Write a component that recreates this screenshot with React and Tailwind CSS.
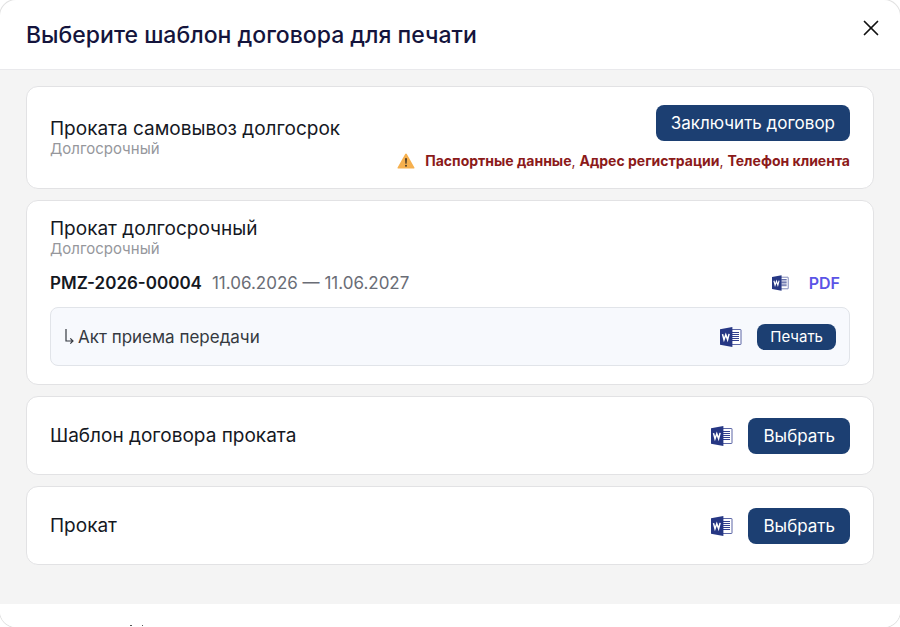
import React from 'react';
import { X } from 'lucide-react';
import clsx from 'clsx';

const WordIcon = ({ className }) => (
  <svg viewBox="0 0 22 20" className={className} aria-hidden="true">
    <path d="M11 2.5h9.5a.5.5 0 0 1 .5.5v14a.5.5 0 0 1-.5.5H11z" fill="#fff" stroke="#4a569c" strokeWidth="0.9" />
    <path d="M12 5.5h7M12 7.5h7M12 9.5h7M12 11.5h7M12 13.5h7" stroke="#33418f" strokeWidth="1" />
    <path d="M0 2.2 12.4 0v20L0 17.8z" fill="#263784" />
    <path d="m2.5 7.1 1.5 5.6 1.8-5 1.8 5 1.5-5.8" fill="none" stroke="#fff" strokeWidth="1.5" />
  </svg>
);

const WarningIcon = () => (
  <svg viewBox="0 0 18 16" className="h-4 w-[18px] shrink-0" aria-hidden="true">
    <path d="M8.2.9a.9.9 0 0 1 1.6 0l7.6 13.5a.8.8 0 0 1-.7 1.2H1.3a.8.8 0 0 1-.7-1.2z" fill="#f6b04e" />
    <path d="M8 5.2h2l-.4 5.6H8.4z" fill="#4d3b26" />
    <circle cx="9" cy="12.7" r="1" fill="#4d3b26" />
  </svg>
);

const WordButton = ({ small }) => (
  <button type="button" aria-label="Word" className="cursor-pointer">
    <WordIcon className={small ? 'h-4 w-[17px]' : 'h-5 w-[22px]'} />
  </button>
);

const Button = ({ small, children }) => (
  <button
    type="button"
    className={clsx(
      'cursor-pointer rounded-lg bg-[#1c3f72] text-white hover:bg-[#16335e]',
      small ? 'h-[26px] px-[13px] text-[15px] leading-5' : 'h-9 px-[15px] text-[17px] leading-6'
    )}
  >
    {children}
  </button>
);

const Card = ({ className, children }) => (
  <section className={clsx('rounded-xl border border-[#e2e2e4] bg-white px-[23px]', className)}>{children}</section>
);

const CardTitle = ({ title, subtitle }) => (
  <div>
    <h2 className="text-[19px] leading-5 text-[#15181f]">{title}</h2>
    {subtitle && <p className="text-[15px] leading-5 text-[#96979c]">{subtitle}</p>}
  </div>
);

const missingFields = ['Паспортные данные', 'Адрес регистрации', 'Телефон клиента'];
const simpleTemplates = ['Шаблон договора проката', 'Прокат'];

const App = () => (
  <div className="min-h-screen bg-white font-['Inter',sans-serif]">
    <div
      role="dialog"
      aria-labelledby="dialog-title"
      className="flex flex-col overflow-hidden rounded-2xl bg-white ring-1 ring-[#e2e2e2]"
    >
      <header className="flex h-[70px] items-center justify-between border-b border-[#e9e9ec] px-[26px]">
        <h1 id="dialog-title" className="text-[23px] leading-8 font-medium text-[#14143c]">
          Выберите шаблон договора для печати
        </h1>
        <button type="button" aria-label="Закрыть" className="-mr-2.5 mb-3.5 cursor-pointer text-[#111]">
          <X className="h-[26px] w-[26px]" strokeWidth={1.6} />
        </button>
      </header>

      <main className="flex flex-col gap-[11px] bg-[#f4f4f4] px-[26px] pt-4 pb-[39px]">
        <Card className="flex items-center justify-between pt-[18px] pb-[15px]">
          <CardTitle title="Проката самовывоз долгосрок" subtitle="Долгосрочный" />
          <div className="flex flex-col items-end gap-2">
            <Button>Заключить договор</Button>
            <div className="flex items-center gap-2.5 text-[#8b1a1a]">
              <WarningIcon />
              <p className="text-sm leading-6">
                {missingFields.map((field, i) => (
                  <React.Fragment key={field}>
                    {i > 0 && ', '}
                    <strong className="font-bold">{field}</strong>
                  </React.Fragment>
                ))}
              </p>
            </div>
          </div>
        </Card>

        <Card className="py-[18px]">
          <CardTitle title="Прокат долгосрочный" subtitle="Долгосрочный" />
          <div className="mt-3 flex items-center justify-between pr-2.5">
            <p className="flex items-center gap-2.5 text-[17px] leading-6 text-[#6a6d76]">
              <strong className="font-semibold text-[#15181f]">PMZ-2026-00004</strong>
              <span>11.06.2026 — 11.06.2027</span>
            </p>
            <div className="flex items-center gap-5">
              <WordButton small />
              <a href="#pdf" className="text-base leading-6 font-semibold text-[#5b54e6]">
                PDF
              </a>
            </div>
          </div>
          <div className="mt-3 flex h-[59px] items-center justify-between rounded-lg border border-[#e1e4e9] bg-[#f7f9fd] px-[13px]">
            <p className="flex items-center gap-1 text-[17px] leading-6 text-[#353941]">
              <svg viewBox="0 0 10 16" className="h-4 w-2.5" fill="none" stroke="currentColor" aria-hidden="true">
                <path d="M2 0v12h7M6.3 9.3 9 12l-2.7 2.7" strokeWidth="1.2" />
              </svg>
              Акт приема передачи
            </p>
            <div className="flex items-center gap-[15px]">
              <WordButton />
              <Button small>Печать</Button>
            </div>
          </div>
        </Card>

        {simpleTemplates.map((title) => (
          <Card key={title} className="flex items-center justify-between pt-[21px] pb-5">
            <CardTitle title={title} />
            <div className="flex items-center gap-[15px]">
              <WordButton />
              <Button>Выбрать</Button>
            </div>
          </Card>
        ))}
      </main>

      <footer className="flex h-[23px] items-end bg-white px-[130px]">
        <svg viewBox="0 0 14 2" className="h-0.5 w-3.5" aria-hidden="true">
          <path d="M0 0h2v1H0zM12 0h1v1h-1z" fill="#555" />
        </svg>
      </footer>
    </div>
  </div>
);

export default App;
